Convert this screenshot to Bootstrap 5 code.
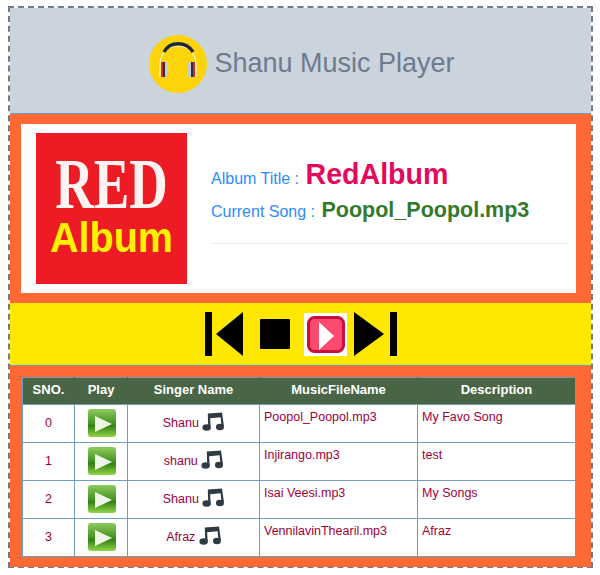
<!DOCTYPE html>
<html lang="en">
<head>
    <meta charset="UTF-8">
    <meta name="viewport" content="width=device-width, initial-scale=1.0">
    <title>Shanu Music Player</title>
    <link rel="stylesheet" href="https://cdn.jsdelivr.net/npm/bootstrap@5.3.3/dist/css/bootstrap.min.css">
    <style>
        body { background: #fff; font-family: "Liberation Sans", Arial, sans-serif; }
        .player-box { width: 585px; height: 562px; margin: 6px 0 0 8px; border: 2px dashed #6d7b8e; }
        .player-head { height: 106px; background: #cbd3dc; border-bottom: 1px solid #6f9cc0; color: #6d7b8e; font-size: 27px; gap: 7px; padding: 6px 0 0 3px; }
        .head-logo { width: 58px; height: 58px; }
        .album-wrap { height: 189px; background: #ff6933; padding: 10px 15px 10px 11px; }
        .album-panel { height: 169px; background: #fff; padding: 9px 8px 9px 15px; gap: 24px; }
        .album-art { width: 151px; height: 151px; background: #ed1c24; flex: none; padding-top: 26px; overflow: hidden; }
        .art-red { font-family: "Liberation Serif", serif; font-weight: 700; font-size: 71px; line-height: 50px; height: 50px; color: #fdf3f3; transform: scaleX(.75); }
        .art-album { font-family: "Liberation Sans", sans-serif; font-weight: 700; font-size: 43px; line-height: 36px; height: 36px; color: #fff200; margin-top: 10px; transform: scaleX(.92); }
        .album-info { padding-top: 20px; color: #2d8cff; font-size: 16px; }
        .album-title { font-size: 28.6px; font-weight: 700; color: #e20a5c; margin-left: 2px; }
        .song-title { font-size: 21.5px; font-weight: 700; color: #35792c; margin-left: 2px; }
        .line-one { height: 41px; }
        .line-two { height: 37px; }
        .info-rule { border-top: 1px solid #eceef1; margin-top: 12px; }
        .ctrl-bar { height: 63px; background: #ffe800; border-bottom: 1px solid #6f9cc0; padding-left: 1px; }
        .ctrl-stop { margin: 0 13px 0 16px; }
        .ctrl-play { margin-right: 7px; }
        .list-wrap { height: 201px; background: #ff6933; padding: 11px 15px 0 12px; }
        .song-table { width: 553px; table-layout: fixed; margin: 0; font-size: 12.5px; color: #a0003a; border-collapse: collapse; }
        .song-table th, .song-table td { border: 1px solid #6f9cc0; padding: 0; background: #fff; color: #a0003a; box-shadow: none; }
        .song-table th { height: 27px; padding-bottom: 2px; background: #4a6545; color: #fff; font-size: 13px; font-weight: 700; text-align: center; vertical-align: middle; border-left-color: #4a6545; border-right-color: #4a6545; }
        .song-table th:first-child { border-left-color: #6f9cc0; }
        .song-table th:last-child { border-right-color: #6f9cc0; }
        .song-table td { height: 38px; }
        .song-table td.mid { text-align: center; vertical-align: middle; }
        .song-table td.singer { padding-bottom: 3px; }
        .song-table td.top { padding: 3px 4px; vertical-align: top; }
        .play-ico { width: 28px; height: 28px; display: block; margin: -2px 0 0 13px; }
        .note-ico { width: 22px; height: 19px; vertical-align: -4px; }
    </style>
</head>
<body>
    <div class="player-box">
        <div class="player-head d-flex align-items-center justify-content-center">
            <svg class="head-logo" viewBox="0 0 58 58">
                <circle cx="29" cy="29" r="29" fill="#fdd40a"/>
                <path d="M11 42V30C11 18 19 11 29 11S47 18 47 30V42" fill="none" stroke="#fff" stroke-width="1"/>
                <path d="M15 17C21 6 37 6 44 17" fill="none" stroke="#1d2a3a" stroke-width="3.5"/>
                <rect x="12" y="27" width="2" height="15" fill="#d8262c"/>
                <rect x="14" y="27" width="2" height="15" fill="#27313f"/>
                <rect x="16" y="27" width="3" height="15" fill="#c6ccd4"/>
                <rect x="39" y="27" width="3" height="15" fill="#c6ccd4"/>
                <rect x="42" y="27" width="2" height="15" fill="#27313f"/>
                <rect x="44" y="27" width="2" height="15" fill="#d8262c"/>
            </svg>
            <span>Shanu Music Player</span>
        </div>
        <div class="album-wrap">
            <div class="album-panel d-flex">
                <div class="album-art text-center">
                    <div class="art-red">RED</div>
                    <div class="art-album">Album</div>
                </div>
                <div class="album-info flex-grow-1">
                    <div class="line-one">Album Title : <span class="album-title">RedAlbum</span></div>
                    <div class="line-two">Current Song : <span class="song-title">Poopol_Poopol.mp3</span></div>
                    <div class="info-rule"></div>
                </div>
            </div>
        </div>
        <div class="ctrl-bar d-flex align-items-center justify-content-center">
            <svg width="38" height="44" viewBox="0 0 38 44"><rect x="0" width="7" height="44"/><path d="M11 22L38 0V44Z"/></svg>
            <svg class="ctrl-stop" width="32" height="32" viewBox="0 0 32 32"><rect x="1" y="1" width="30" height="30" rx="1"/></svg>
            <svg class="ctrl-play" width="43" height="43" viewBox="0 0 43 43"><rect width="43" height="43" fill="#fff"/><rect x="4.5" y="4.5" width="35" height="34" rx="6" fill="#fa4b6e" stroke="#c8103c" stroke-width="3"/><path d="M15 9V37L30 23Z" fill="#fff"/></svg>
            <svg width="43" height="44" viewBox="0 0 43 44"><path d="M0 0L30 22L0 44Z"/><rect x="36" width="7" height="44"/></svg>
        </div>
        <div class="list-wrap">
            <table class="table song-table">
                <colgroup><col width="52"><col width="53"><col width="132"><col width="158"><col width="158"></colgroup>
                <thead>
                    <tr><th>SNO.</th><th>Play</th><th>Singer Name</th><th>MusicFileName</th><th>Description</th></tr>
                </thead>
                <tbody id="songRows"></tbody>
            </table>
        </div>
    </div>

    <script>
        const songs = [
            ['Shanu', 'Poopol_Poopol.mp3', 'My Favo Song'],
            ['shanu', 'Injirango.mp3', 'test'],
            ['Shanu', 'Isai Veesi.mp3', 'My Songs'],
            ['Afraz', 'VennilavinThearil.mp3', 'Afraz']
        ];
        const playIcon = `<svg class="play-ico" viewBox="0 0 28 28">
            <defs><linearGradient id="gr" x1="0" y1="0" x2="0" y2="1">
                <stop offset="0" stop-color="#8fcb5c"/><stop offset=".55" stop-color="#3f8f1e"/><stop offset=".58" stop-color="#2f7d14"/><stop offset="1" stop-color="#93d548"/>
            </linearGradient></defs>
            <rect width="28" height="28" rx="3" fill="url(#gr)"/>
            <path d="M7 7V23L24 15Z" fill="#eef7e6"/></svg>`;
        // beam and stems lean a little, as in the picture
        const noteIcon = `<svg class="note-ico" viewBox="0 0 23 20">
            <path d="M6 1.5L21 0.5L23 15L20.5 15.5L19.5 5.5L8.5 6.5L9 16L6.5 16.5Z" fill="#2f3a45"/>
            <ellipse cx="4.8" cy="16.3" rx="4.4" ry="3.4" fill="#2f3a45"/>
            <ellipse cx="18.8" cy="15.8" rx="4.2" ry="3.4" fill="#2f3a45"/></svg>`;
        const body = document.getElementById('songRows');
        songs.forEach((song, i) => {
            const row = document.createElement('tr');
            row.innerHTML = `
                <td class="mid">${i}</td>
                <td class="mid">${playIcon}</td>
                <td class="mid singer">${song[0]} ${noteIcon}</td>
                <td class="top">${song[1]}</td>
                <td class="top">${song[2]}</td>`;
            body.appendChild(row);
        });
    </script>
    <script src="https://cdn.jsdelivr.net/npm/bootstrap@5.3.3/dist/js/bootstrap.bundle.min.js"></script>
</body>
</html>
